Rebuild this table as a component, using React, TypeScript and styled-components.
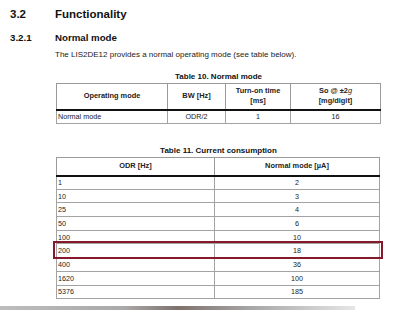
import React from 'react';
import styled, {createGlobalStyle} from "styled-components";

const GlobalStyle = createGlobalStyle`
  body {
    margin: 0;
    background: #fff;
    font-family: "Liberation Sans", Arial, sans-serif;
    color: #1a1a1a;
  }
`

const table10 = [
    {mode: 'Normal mode', bw: 'ODR/2', time: '1', so: '16'},
]

const table11 = [
    {odr: '1', current: '2'},
    {odr: '10', current: '3'},
    {odr: '25', current: '4'},
    {odr: '50', current: '6'},
    {odr: '100', current: '10'},
    {odr: '200', current: '18'},
    {odr: '400', current: '36'},
    {odr: '1620', current: '100'},
    {odr: '5376', current: '185'},
]

const ROW_H = 13.7
const HEAD_H = 18
const marked = 5

export default function App() {
    return (
        <Page>
            <GlobalStyle/>
            <Heading>
                <span>3.2</span>
                <span>Functionality</span>
            </Heading>
            <SubHeading>
                <span>3.2.1</span>
                <span>Normal mode</span>
            </SubHeading>
            <Body>
                <Intro>The LIS2DE12 provides a normal operating mode (see table below).</Intro>

                <Caption>Table 10. Normal mode</Caption>
                <Table $width={325}>
                    <colgroup>
                        <col style={{width: 111}}/>
                        <col style={{width: 58}}/>
                        <col style={{width: 65}}/>
                        <col/>
                    </colgroup>
                    <thead>
                    <tr>
                        <Th $height={26}>Operating mode</Th>
                        <Th $height={26}>BW [Hz]</Th>
                        <Th $height={26}>Turn-on time<br/>[ms]</Th>
                        <Th $height={26}>So @ ±2<i>g</i><br/>[mg/digit]</Th>
                    </tr>
                    </thead>
                    <tbody>
                    {table10.map(r => (
                        <tr key={r.mode}>
                            <Td $height={14}>{r.mode}</Td>
                            <Td $height={14} $center>{r.bw}</Td>
                            <Td $height={14} $center>{r.time}</Td>
                            <Td $height={14} $center>{r.so}</Td>
                        </tr>
                    ))}
                    </tbody>
                </Table>

                <Caption $gap={22}>Table 11. Current consumption</Caption>
                <TableWrap>
                    <Table $width={324}>
                        <colgroup>
                            <col style={{width: 158}}/>
                            <col/>
                        </colgroup>
                        <thead>
                        <tr>
                            <Th $height={HEAD_H}>ODR [Hz]</Th>
                            <Th $height={HEAD_H}>Normal mode [µA]</Th>
                        </tr>
                        </thead>
                        <tbody>
                        {table11.map(r => (
                            <tr key={r.odr}>
                                <Td $height={ROW_H}>{r.odr}</Td>
                                <Td $height={ROW_H} $center>{r.current}</Td>
                            </tr>
                        ))}
                        </tbody>
                    </Table>
                    <Highlight style={{top: HEAD_H + marked * ROW_H - 3}}/>
                </TableWrap>
            </Body>
            <Shade/>
        </Page>
    );
}

const Page = styled.div`
  width: 400px;
  height: 310px;
  overflow: hidden;
  position: relative;
`

const Heading = styled.h1`
  display: grid;
  grid-template-columns: 45px 1fr;
  margin: 0;
  padding: 7px 0 0 10px;
  font-size: 11.5px;
  line-height: 15px;
  font-weight: bold;
  color: #111;
`

const SubHeading = styled.h2`
  display: grid;
  grid-template-columns: 45px 1fr;
  margin: 0;
  padding: 9px 0 0 10px;
  font-size: 9.7px;
  line-height: 13px;
  font-weight: bold;
  color: #111;
`

const Body = styled.div`
  padding-left: 56px;
`

const Intro = styled.p`
  margin: 6px 0 0 -1px;
  font-size: 8px;
  line-height: 10px;
  color: #222;
`

const Caption = styled.div<{ $gap?: number }>`
  width: 325px;
  margin-top: ${p => p.$gap ?? 12}px;
  text-align: center;
  font-size: 8px;
  line-height: 9px;
  font-weight: bold;
  color: #111;
`

const TableWrap = styled.div`
  position: relative;
  width: 324px;
`

const Table = styled.table<{ $width: number }>`
  width: ${p => p.$width}px;
  margin-top: 2px;
  border-collapse: collapse;
  table-layout: fixed;
  font-size: 7.2px;
  color: #222;
  border: 1px solid #9a9a9a;
`

const Th = styled.th<{ $height: number }>`
  height: ${p => p.$height}px;
  padding: 0 2px;
  border: 1px solid #9a9a9a;
  border-bottom: 2px solid #111;
  text-align: center;
  font-size: 7.4px;
  font-weight: bold;
  line-height: 10px;
  color: #222;
  box-sizing: border-box;

  i {
    font-weight: normal;
  }
`

const Td = styled.td<{ $height: number, $center?: boolean }>`
  height: ${p => p.$height}px;
  padding: 0 1px;
  border: 1px solid #a3a3a3;
  text-align: ${p => p.$center ? 'center' : 'left'};
  line-height: 9px;
  box-sizing: border-box;
`

const Highlight = styled.div`
  position: absolute;
  left: -3px;
  right: -3px;
  height: 18px;
  border: 2px solid #86192a;
  box-sizing: border-box;
  pointer-events: none;
`

const Shade = styled.div`
  position: absolute;
  left: 0;
  bottom: 0;
  width: 355px;
  height: 4px;
  background: linear-gradient(90deg, #bdbdbd 0%, #a9a9a9 35%, #7f716c 50%, #a5a5a5 70%, #e6e6e6 100%);
`
